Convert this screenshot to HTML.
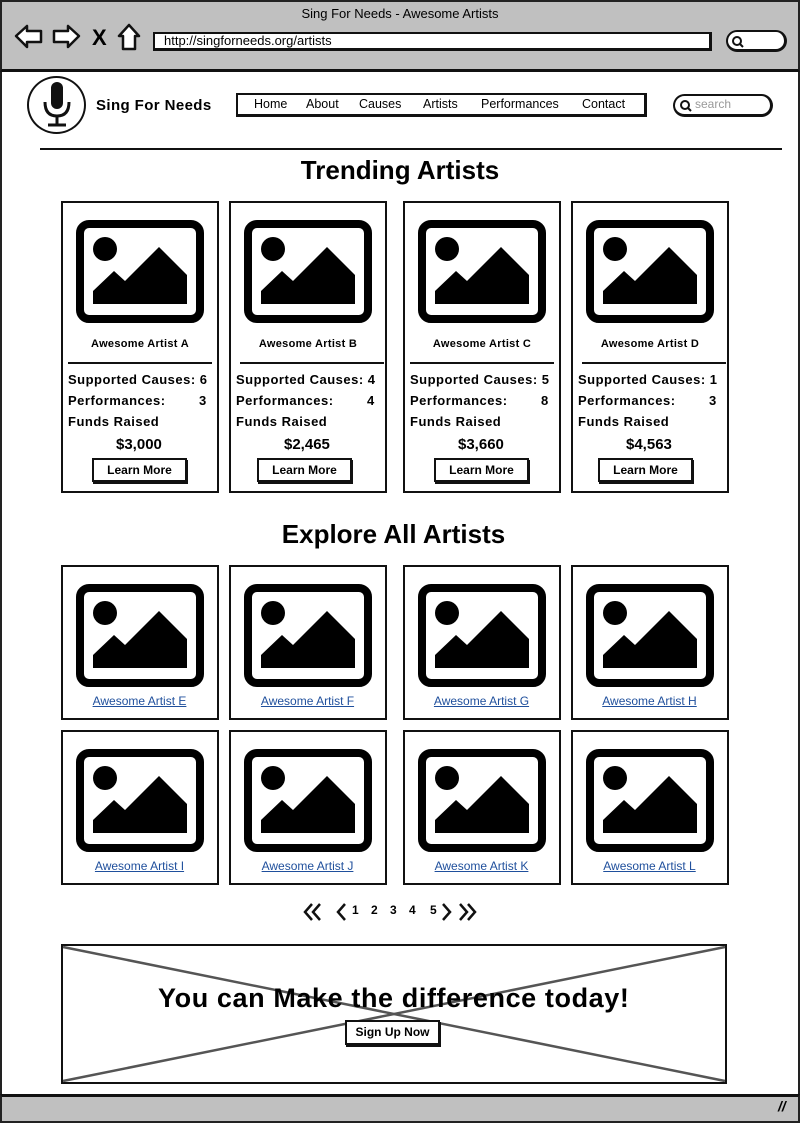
<!DOCTYPE html>
<html><head><meta charset="utf-8"><style>
*{box-sizing:border-box;margin:0;padding:0}
body{width:800px;height:1123px;position:relative;background:#fff;font-family:"Liberation Sans",sans-serif;color:#000;overflow:hidden}
.a{position:absolute}
.box{position:absolute;border:2px solid #111;background:#fff}
.card{position:absolute;border:2px solid #111;background:#fff}
.t{position:absolute;white-space:nowrap}
.btn{position:absolute;border:2px solid #111;box-shadow:1px 2px 0 #111;background:#fff;font-size:12px;font-weight:bold;text-align:center}
.lnk{position:absolute;color:#1f4f9c;text-decoration:underline;font-size:12px;width:157px;text-align:center}
.st{position:absolute;white-space:nowrap;font-size:13px;font-weight:bold;line-height:21px;letter-spacing:0.5px}
</style></head><body>
<div class="a" style="left:0;top:0;width:800px;height:1123px;border:2px solid #222;border-radius:3px"></div>
<div class="a" style="left:0;top:0;width:800px;height:72px;background:#c0c0c0;border:2px solid #222;border-bottom:3px solid #111"></div>
<div class="t" style="left:0;width:800px;text-align:center;top:6px;font-size:13px">Sing For Needs - Awesome Artists</div>
<svg class="a" style="left:14px;top:22px" width="130" height="30" viewBox="0 0 130 30">
<path d="M2 14 L13 4 L13 9 L27 9 L27 20 L13 20 L13 25 Z" fill="#fff" stroke="#111" stroke-width="2.5" stroke-linejoin="round"/>
<path d="M65 14 L54 4 L54 9 L40 9 L40 20 L54 20 L54 25 Z" fill="#fff" stroke="#111" stroke-width="2.5" stroke-linejoin="round"/>
<text x="78" y="23" font-size="22" font-weight="bold" font-family="Liberation Sans">X</text>
<path d="M115 3 L105 14 L109 14 L109 27 L121 27 L121 14 L125 14 Z" fill="#fff" stroke="#111" stroke-width="2.5" stroke-linejoin="round"/>
</svg>
<div class="box" style="left:153px;top:32px;width:559px;height:19px;border-width:2px 3px 3px 2px"></div>
<div class="t" style="left:164px;top:33px;font-size:13px">http://singforneeds.org/artists</div>
<div class="box" style="left:726px;top:30px;width:61px;height:22px;border-radius:12px;border-width:2px 3px 3px 2px"></div>
<svg class="a" style="left:731px;top:35px" width="14" height="14"><circle cx="6" cy="6" r="4" fill="none" stroke="#111" stroke-width="2"/><line x1="9" y1="9" x2="12" y2="12" stroke="#111" stroke-width="2"/></svg>

<div class="box" style="left:27px;top:76px;width:59px;height:58px;border-radius:50%"></div>
<svg class="a" style="left:27px;top:76px" width="59" height="58"><rect x="24" y="6" width="12" height="27" rx="6" fill="#111"/><path d="M18 26 Q18 40 30 40 Q42 40 42 26" fill="none" stroke="#111" stroke-width="3"/><line x1="30" y1="40" x2="30" y2="48" stroke="#111" stroke-width="3"/><line x1="21" y1="49" x2="39" y2="49" stroke="#111" stroke-width="3"/></svg>
<div class="t" style="left:96px;top:97px;font-size:15px;font-weight:bold;letter-spacing:0.4px">Sing For Needs</div>
<div class="box" style="left:236px;top:93px;width:411px;height:24px;border-width:2px 3px 3px 2px"></div>
<div class="t" style="left:254px;top:97px;font-size:12.5px">Home</div>
<div class="t" style="left:306px;top:97px;font-size:12.5px">About</div>
<div class="t" style="left:359px;top:97px;font-size:12.5px">Causes</div>
<div class="t" style="left:423px;top:97px;font-size:12.5px">Artists</div>
<div class="t" style="left:481px;top:97px;font-size:12.5px">Performances</div>
<div class="t" style="left:582px;top:97px;font-size:12.5px">Contact</div>
<div class="box" style="left:673px;top:94px;width:100px;height:23px;border-radius:12px;border-width:2px 3px 3px 2px"></div>
<svg class="a" style="left:679px;top:99px" width="14" height="14"><circle cx="6" cy="6" r="4" fill="none" stroke="#111" stroke-width="2"/><line x1="9" y1="9" x2="12" y2="12" stroke="#111" stroke-width="2"/></svg>
<div class="t" style="left:695px;top:97px;font-size:12px;color:#999">search</div>
<div class="a" style="left:40px;top:148px;width:742px;height:2px;background:#111"></div>

<div class="t" style="left:0;width:800px;text-align:center;top:155px;font-size:26px;font-weight:bold">Trending Artists</div>
<div class="t" style="left:0;width:787px;text-align:center;top:519px;font-size:26px;font-weight:bold">Explore All Artists</div>

<svg width="0" height="0" style="position:absolute"><defs><g id="img"><rect x="4" y="4" width="120" height="95" rx="9" fill="#fff" stroke="#000" stroke-width="8"/><circle cx="29" cy="29" r="12"/><path d="M17 71 L38 51 L49 61 L83 27 L111 55 L111 84 L17 84 Z"/></g></defs></svg>

<div class="card" style="left:61px;top:201px;width:158px;height:292px"></div>
<div class="card" style="left:229px;top:201px;width:158px;height:292px"></div>
<div class="card" style="left:403px;top:201px;width:158px;height:292px"></div>
<div class="card" style="left:571px;top:201px;width:158px;height:292px"></div>
<svg class="a" style="left:76px;top:220px" width="128" height="103"><use href="#img"/></svg>
<svg class="a" style="left:244px;top:220px" width="128" height="103"><use href="#img"/></svg>
<svg class="a" style="left:418px;top:220px" width="128" height="103"><use href="#img"/></svg>
<svg class="a" style="left:586px;top:220px" width="128" height="103"><use href="#img"/></svg>

<div class="t" style="left:61px;width:158px;text-align:center;top:338px;font-size:11px;font-weight:bold;letter-spacing:0.3px">Awesome Artist A</div>
<div class="t" style="left:229px;width:158px;text-align:center;top:338px;font-size:11px;font-weight:bold;letter-spacing:0.3px">Awesome Artist B</div>
<div class="t" style="left:403px;width:158px;text-align:center;top:338px;font-size:11px;font-weight:bold;letter-spacing:0.3px">Awesome Artist C</div>
<div class="t" style="left:571px;width:158px;text-align:center;top:338px;font-size:11px;font-weight:bold;letter-spacing:0.3px">Awesome Artist D</div>
<div class="a" style="left:68px;top:362px;width:144px;height:2px;background:#111"></div>
<div class="a" style="left:240px;top:362px;width:144px;height:2px;background:#111"></div>
<div class="a" style="left:410px;top:362px;width:144px;height:2px;background:#111"></div>
<div class="a" style="left:582px;top:362px;width:144px;height:2px;background:#111"></div>

<div class="st" style="left:68px;top:369px">Supported Causes: 6<br>Performances:<span style="position:absolute;left:131px">3</span><br>Funds Raised</div>
<div class="st" style="left:236px;top:369px">Supported Causes: 4<br>Performances:<span style="position:absolute;left:131px">4</span><br>Funds Raised</div>
<div class="st" style="left:410px;top:369px">Supported Causes: 5<br>Performances:<span style="position:absolute;left:131px">8</span><br>Funds Raised</div>
<div class="st" style="left:578px;top:369px">Supported Causes: 1<br>Performances:<span style="position:absolute;left:131px">3</span><br>Funds Raised</div>
<div class="t" style="left:116px;top:436px;font-size:15px;font-weight:bold">$3,000</div>
<div class="t" style="left:284px;top:436px;font-size:15px;font-weight:bold">$2,465</div>
<div class="t" style="left:458px;top:436px;font-size:15px;font-weight:bold">$3,660</div>
<div class="t" style="left:626px;top:436px;font-size:15px;font-weight:bold">$4,563</div>
<div class="btn" style="left:92px;top:458px;width:95px;height:24px;line-height:20px">Learn More</div>
<div class="btn" style="left:257px;top:458px;width:95px;height:24px;line-height:20px">Learn More</div>
<div class="btn" style="left:434px;top:458px;width:95px;height:24px;line-height:20px">Learn More</div>
<div class="btn" style="left:598px;top:458px;width:95px;height:24px;line-height:20px">Learn More</div>

<div class="card" style="left:61px;top:565px;width:158px;height:155px"></div>
<div class="card" style="left:229px;top:565px;width:158px;height:155px"></div>
<div class="card" style="left:403px;top:565px;width:158px;height:155px"></div>
<div class="card" style="left:571px;top:565px;width:158px;height:155px"></div>
<div class="card" style="left:61px;top:730px;width:158px;height:155px"></div>
<div class="card" style="left:229px;top:730px;width:158px;height:155px"></div>
<div class="card" style="left:403px;top:730px;width:158px;height:155px"></div>
<div class="card" style="left:571px;top:730px;width:158px;height:155px"></div>
<svg class="a" style="left:76px;top:584px" width="128" height="103"><use href="#img"/></svg>
<svg class="a" style="left:244px;top:584px" width="128" height="103"><use href="#img"/></svg>
<svg class="a" style="left:418px;top:584px" width="128" height="103"><use href="#img"/></svg>
<svg class="a" style="left:586px;top:584px" width="128" height="103"><use href="#img"/></svg>
<svg class="a" style="left:76px;top:749px" width="128" height="103"><use href="#img"/></svg>
<svg class="a" style="left:244px;top:749px" width="128" height="103"><use href="#img"/></svg>
<svg class="a" style="left:418px;top:749px" width="128" height="103"><use href="#img"/></svg>
<svg class="a" style="left:586px;top:749px" width="128" height="103"><use href="#img"/></svg>
<div class="lnk" style="left:61px;top:694px">Awesome Artist E</div>
<div class="lnk" style="left:229px;top:694px">Awesome Artist F</div>
<div class="lnk" style="left:403px;top:694px">Awesome Artist G</div>
<div class="lnk" style="left:571px;top:694px">Awesome Artist H</div>
<div class="lnk" style="left:61px;top:859px">Awesome Artist I</div>
<div class="lnk" style="left:229px;top:859px">Awesome Artist J</div>
<div class="lnk" style="left:403px;top:859px">Awesome Artist K</div>
<div class="lnk" style="left:571px;top:859px">Awesome Artist L</div>

<svg class="a" style="left:300px;top:900px" width="180" height="24">
<g fill="none" stroke="#111" stroke-width="2.5"><path d="M12 4 L5 12 L12 20 M20 4 L13 12 L20 20"/><path d="M45 4 L38 12 L45 20"/><path d="M143 4 L150 12 L143 20"/><path d="M160 4 L167 12 L160 20 M168 4 L175 12 L168 20"/></g>
<g font-family="Liberation Sans" font-size="12" font-weight="bold"><text x="52" y="14">1</text><text x="71" y="14">2</text><text x="90" y="14">3</text><text x="109" y="14">4</text><text x="130" y="14">5</text></g>
</svg>

<div class="box" style="left:61px;top:944px;width:666px;height:140px"></div>
<svg class="a" style="left:61px;top:944px" width="666" height="140"><line x1="2" y1="3" x2="664" y2="137" stroke="#555" stroke-width="2.5"/><line x1="664" y1="3" x2="2" y2="137" stroke="#555" stroke-width="2.5"/></svg>
<div class="t" style="left:158px;top:983px;font-size:27px;font-weight:bold;letter-spacing:0.6px">You can Make the difference today!</div>
<div class="btn" style="left:345px;top:1020px;width:95px;height:25px;line-height:21px">Sign Up Now</div>

<div class="a" style="left:0;top:1094px;width:800px;height:29px;background:#c0c0c0;border:2px solid #222;border-top:3px solid #111"></div>
<div class="t" style="left:778px;top:1098px;font-size:14px;font-weight:bold;font-style:italic">//</div>
</body></html>
